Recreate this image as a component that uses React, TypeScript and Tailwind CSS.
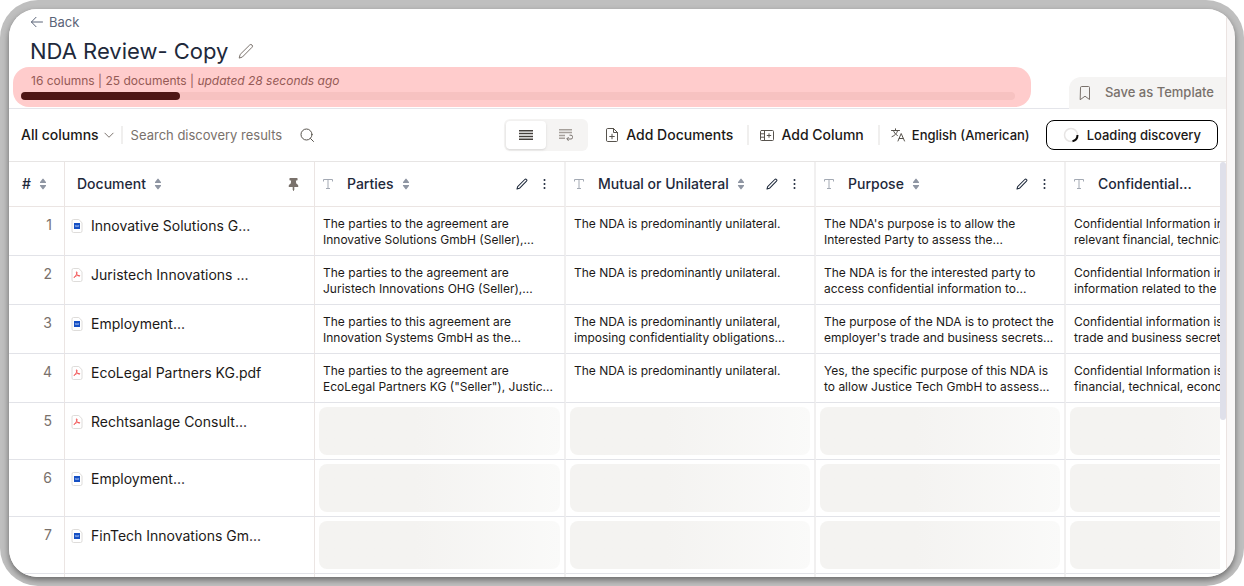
import React from "react"
import { FaThumbtack } from "react-icons/fa"

type FileKind = "doc" | "pdf"

type Row = {
  id: number
  kind: FileKind
  name: string
  cells?: string[]
}

const columns = ["Parties", "Mutual or Unilateral", "Purpose", "Confidential..."]

const rows: Row[] = [
  {
    id: 1,
    kind: "doc",
    name: "Innovative Solutions G...",
    cells: [
      "The parties to the agreement are\nInnovative Solutions GmbH (Seller),...",
      "The NDA is predominantly unilateral.",
      "The NDA's purpose is to allow the\nInterested Party to assess the...",
      "Confidential Information in\nrelevant financial, technical",
    ],
  },
  {
    id: 2,
    kind: "pdf",
    name: "Juristech Innovations ...",
    cells: [
      "The parties to the agreement are\nJuristech Innovations OHG (Seller),...",
      "The NDA is predominantly unilateral.",
      "The NDA is for the interested party to\naccess confidential information to...",
      "Confidential Information in\ninformation related to the",
    ],
  },
  {
    id: 3,
    kind: "doc",
    name: "Employment...",
    cells: [
      "The parties to this agreement are\nInnovation Systems GmbH as the...",
      "The NDA is predominantly unilateral,\nimposing confidentiality obligations...",
      "The purpose of the NDA is to protect the\nemployer's trade and business secrets...",
      "Confidential information is\ntrade and business secrets",
    ],
  },
  {
    id: 4,
    kind: "pdf",
    name: "EcoLegal Partners KG.pdf",
    cells: [
      "The parties to the agreement are\nEcoLegal Partners KG (\"Seller\"), Justic...",
      "The NDA is predominantly unilateral.",
      "Yes, the specific purpose of this NDA is\nto allow Justice Tech GmbH to assess...",
      "Confidential Information is\nfinancial, technical, econom",
    ],
  },
  { id: 5, kind: "pdf", name: "Rechtsanlage Consult..." },
  { id: 6, kind: "doc", name: "Employment..." },
  { id: 7, kind: "doc", name: "FinTech Innovations Gm..." },
  { id: 8, kind: "doc", name: "" },
]

const Icon = ({
  size = 16,
  className,
  children,
}: {
  size?: number
  className?: string
  children: React.ReactNode
}) => (
  <svg
    width={size}
    height={size}
    viewBox="0 0 16 16"
    fill="none"
    stroke="currentColor"
    strokeLinecap="round"
    strokeLinejoin="round"
    aria-hidden="true"
    className={`shrink-0 ${className ?? ""}`}
  >
    {children}
  </svg>
)

const PencilIcon = ({
  size,
  strokeWidth,
}: {
  size: number
  strokeWidth: number
}) => (
  <Icon size={size}>
    <path d="M1.3 14.7l.9-3.3 9.5-9.4a1.6 1.6 0 0 1 2.3 2.3l-9.4 9.5z" strokeWidth={strokeWidth} />
  </Icon>
)

const SortIcon = () => (
  <svg width="8" height="12" viewBox="0 0 8 12" aria-hidden="true" className="shrink-0 text-[#8f96a3]">
    <path
      d="M3.4.9a.8.8 0 0 1 1.2 0l2.3 3c.4.5.1 1.1-.5 1.1H1.6c-.6 0-.9-.6-.5-1.1zM3.4 11.1a.8.8 0 0 0 1.2 0l2.3-3c.4-.5.1-1.1-.5-1.1H1.6c-.6 0-.9.6-.5 1.1z"
      fill="currentColor"
    />
  </svg>
)

const TextIcon = () => (
  <svg
    width="10"
    height="10"
    viewBox="0 0 10 10"
    fill="none"
    stroke="currentColor"
    aria-hidden="true"
    className="shrink-0 text-[#a3a9b3]"
  >
    <path d="M.5 2.5v-2h9v2M5 .5v9M3 9.5h4" />
  </svg>
)

const FileIcon = ({ kind }: { kind: FileKind }) => (
  <svg width="12" height="14" viewBox="0 0 12 14" fill="none" aria-hidden="true" className="shrink-0">
    <path
      d="M2.5.5h5.3L11 3.7V12a1.5 1.5 0 0 1-1.5 1.5h-7A1.5 1.5 0 0 1 1 12V2A1.5 1.5 0 0 1 2.5.5z"
      fill="#fff"
      stroke="#d6d3d1"
      strokeWidth=".8"
    />
    {kind === "doc" ? (
      <>
        <rect x="3" y="4" width="6" height="6" fill="#1650c4" />
        <path d="M4.2 6l.8 2 1-1.8L7 8l.8-2" stroke="#b9cdf5" strokeWidth=".6" />
      </>
    ) : (
      <path
        d="M5.7 3.8c-.5 0-.4 1 .1 2.1.6 1.3 1.6 2.2 2.6 2.3.8 0 .6-.8-.4-.8-1.5 0-3.6.6-4.7 1.5-.7.6-.2 1 .3.4.9-1 2.1-3.2 2.5-4.7 0-.5-.1-.8-.4-.8z"
        stroke="#f04444"
        strokeWidth=".8"
      />
    )}
  </svg>
)

const Divider = ({ className }: { className: string }) => (
  <div className={`w-0.5 bg-[#f0efee] shrink-0 ${className}`} />
)

const Header = () => (
  <header className="flex items-end border-b border-[#e4e5ea] text-[#1e293b]">
    <div className="flex-1 pt-[3px] pb-px min-w-0">
      <a href="#" className="flex items-center gap-1 w-fit ml-5 text-[13px] leading-5 text-[#5b6478]">
        <Icon size={16}>
          <path d="M13.5 8H2.5M7 3.3L2.4 8 7 12.7" />
        </Icon>
        Back
      </a>
      <div className="flex items-center gap-2.5 mt-[3px] ml-[21px]">
        <h1 className="text-[22px] leading-8">NDA Review- Copy</h1>
        <button aria-label="Rename" className="text-stone-500">
          <PencilIcon size={16} strokeWidth={1} />
        </button>
      </div>
      <div className="relative ml-1 mr-[38px] pt-1 pb-[7px] pl-2 pr-4">
        <p className="pl-2.5 text-xs leading-5 text-stone-500">
          16 columns | 25 documents | <em>updated 28 seconds ago</em>
        </p>
        <div className="mt-px h-2 rounded-full bg-[#f5f3f1]">
          <div className="h-2 w-[16%] rounded-full bg-[#231c1a]" />
        </div>
        <div className="absolute inset-0 rounded-2xl bg-[#ff0000]/20 pointer-events-none" />
      </div>
    </div>
    <button className="flex items-center gap-3 h-8 -mb-px pl-2 pr-3 rounded-tl-xl bg-[#f5f4f3] text-[13px] font-medium text-stone-500">
      <Icon size={16}>
        <path d="M3.5 2.5a1 1 0 0 1 1-1h7a1 1 0 0 1 1 1v12L8 11.2l-4.5 3.3z" />
      </Icon>
      Save as Template
    </button>
  </header>
)

const Toolbar = () => (
  <div className="flex items-center h-[53px] pl-3 pr-2 border-b border-[#e7e5e4] text-sm font-medium text-stone-900">
    <button className="flex items-center gap-1">
      All columns
      <Icon size={12} className="text-stone-500">
        <path d="M2.5 5.5L8 11l5.5-5.5" strokeWidth="1.3" />
      </Icon>
    </button>
    <Divider className="h-[18px] ml-1.5 mr-2" />
    <label className="flex items-center gap-2">
      <input
        type="text"
        aria-label="Search discovery results"
        placeholder="Search discovery results"
        className="w-40 text-[13px] font-normal outline-none placeholder:text-stone-500"
      />
      <Icon size={16} className="text-stone-600">
        <circle cx="7.5" cy="7.5" r="5.5" />
        <path d="M11.5 11.5l3 3" />
      </Icon>
    </label>
    <div className="flex items-center ml-auto mr-4 p-0.5 h-8 rounded-md bg-[#f5f4f3]">
      <button aria-label="Compact rows" className="flex items-center justify-center w-10 h-7 rounded bg-white shadow-sm">
        <svg width="14" height="10" viewBox="0 0 14 10" stroke="#44403c" strokeWidth="1.4" aria-hidden="true">
          <path d="M0 .7h14M0 3.5h14M0 6.5h14M0 9.3h14" />
        </svg>
      </button>
      <button aria-label="Wrap rows" className="flex items-center justify-center w-10 h-7 text-stone-400">
        <svg width="14" height="12" viewBox="0 0 14 12" fill="none" stroke="currentColor" aria-hidden="true">
          <path d="M0 .7h13M0 3.5h13M0 6.5h6M0 9.3h6" strokeWidth="1.4" />
          <path d="M10.5 6.2H12a1.5 1.5 0 0 1 1.5 1.5v.8A1.5 1.5 0 0 1 12 10H8M9.7 8l-2 2 2 1.8" stroke="#78716c" />
        </svg>
      </button>
    </div>
    <button className="flex items-center gap-1.5">
      <Icon size={16} className="text-stone-600">
        <path d="M2.5 2.5a1 1 0 0 1 1-1h6l4 4v8a1 1 0 0 1-1 1h-9a1 1 0 0 1-1-1zM9.5 1.5v4h4M8 7.2v4.6M5.7 9.5h4.6" />
      </Icon>
      Add Documents
    </button>
    <Divider className="h-5 ml-3.5 mr-2.5" />
    <button className="flex items-center gap-1.5">
      <Icon size={16} className="text-stone-600">
        <rect x="1.5" y="3.5" width="13" height="10" rx="1" />
        <path d="M5.5 3.5v10M1.5 6.8h4M1.5 10.2h4M10 6.7v3.6M8.2 8.5h3.6" />
      </Icon>
      Add Column
    </button>
    <Divider className="h-5 ml-3.5 mr-2.5" />
    <button className="flex items-center gap-1.5 text-[13px]">
      <Icon size={16} className="text-stone-600">
        <path d="M1.5 3.5h8M5.5 1.8v1.7M7.7 3.5c-.7 2.7-2.8 5-5.7 6.2M3.4 3.5c.6 2 2 3.8 4 5M8 14l3.2-7.5L14.5 14M9.2 11.5h4.1" />
      </Icon>
      English (American)
    </button>
    <button className="flex items-center gap-2 h-[30px] ml-4 px-4 border border-black rounded-lg text-[13px]">
      <svg width="16" height="16" viewBox="0 0 16 16" fill="none" strokeWidth="1.5" aria-hidden="true">
        <circle cx="8" cy="8" r="6.5" stroke="#e7e5e4" />
        <path d="M14.5 8a6.5 6.5 0 0 1-5 6.3" stroke="#0c0a09" strokeWidth="2" />
      </svg>
      Loading discovery
    </button>
  </div>
)

const ColumnHead = ({ title, clipped }: { title: string; clipped: boolean }) => (
  <th className="h-[45px] p-0 pl-2 pr-3 border-b border-r-2 border-b-[#ebe5e3] border-r-[#f1f0f0] font-medium">
    <div className="flex items-center gap-2">
      <TextIcon />
      <span className="ml-1.5">{title}</span>
      {!clipped && (
        <>
          <SortIcon />
          <button aria-label={`Edit ${title}`} className="ml-auto">
            <PencilIcon size={12} strokeWidth={1.4} />
          </button>
          <button aria-label={`${title} options`}>
            <svg width="16" height="12" viewBox="0 0 16 12" fill="currentColor" aria-hidden="true">
              <circle cx="8.5" cy="2" r="1" />
              <circle cx="8.5" cy="6" r="1" />
              <circle cx="8.5" cy="10" r="1" />
            </svg>
          </button>
        </>
      )}
    </div>
  </th>
)

const DiscoveryTable = () => (
  <table className="table-fixed w-[1308px] border-separate border-spacing-0 text-left text-[#1e293b]">
    <colgroup>
      <col className="w-14" />
      <col className="w-[250px]" />
      <col className="w-[251px]" />
      <col className="w-[250px]" />
      <col className="w-[250px]" />
      <col className="w-[251px]" />
    </colgroup>
    <thead>
      <tr className="text-sm">
        <th className="h-[45px] p-0 pl-[13px] border-b border-r border-[#ebe5e3] font-medium">
          <div className="flex items-center gap-2">
            # <SortIcon />
          </div>
        </th>
        <th className="h-[45px] p-0 pl-3 pr-3.5 border-b border-r border-[#ebe5e3] font-medium">
          <div className="flex items-center gap-2">
            Document <SortIcon />
            <FaThumbtack size={13} className="ml-auto text-stone-500" />
          </div>
        </th>
        {columns.map((title, i) => (
          <ColumnHead key={title} title={title} clipped={i === columns.length - 1} />
        ))}
      </tr>
    </thead>
    <tbody>
      {rows.map((row) => (
        <tr key={row.id} className="align-top">
          <td className="p-0 pt-2 pr-3 border-b border-r border-b-[#e2e3e8] border-r-[#ebe5e3] text-right text-sm text-stone-500">
            {row.name && row.id}
          </td>
          <td className="p-0 pt-[9px] pl-1.5 border-b border-r border-b-[#e2e3e8] border-r-[#ebe5e3]">
            {row.name && (
              <div className="flex items-center gap-2 text-sm text-stone-900">
                <FileIcon kind={row.kind} />
                {row.name}
              </div>
            )}
          </td>
          {columns.map((title, i) => (
            <td key={title} className="p-0 border-b border-r-2 border-b-[#e2e3e8] border-r-[#f1f0f0]">
              {row.cells ? (
                <p className="h-12 pt-[9px] pl-2 text-xs leading-4 whitespace-pre text-stone-900">{row.cells[i]}</p>
              ) : (
                <div className="h-12 m-1 rounded-lg bg-linear-to-r from-[#f4f3f1] from-40% to-[#fafaf9]" />
              )}
            </td>
          ))}
        </tr>
      ))}
    </tbody>
  </table>
)

const App = () => {
  return (
    <div className="h-screen p-[9px] overflow-hidden rounded-[38px] bg-[#bfbfbf] font-['Inter',sans-serif]">
      <div className="flex h-full overflow-hidden rounded-[28px] bg-[#f9f7f7] shadow-[0_3px_6px_rgba(0,0,0,0.45)]">
        <main className="flex flex-col flex-1 min-w-0 bg-white">
          <Header />
          <Toolbar />
          <div className="flex flex-1 min-h-0">
            <div className="flex-1 min-w-0 overflow-hidden">
              <DiscoveryTable />
            </div>
            <div className="w-1.5 h-[258px] rounded-full bg-[#dfe0ea]" />
          </div>
        </main>
        <div className="w-[9px] border-l border-[#ebe3e1]" />
      </div>
    </div>
  )
}

export default App
